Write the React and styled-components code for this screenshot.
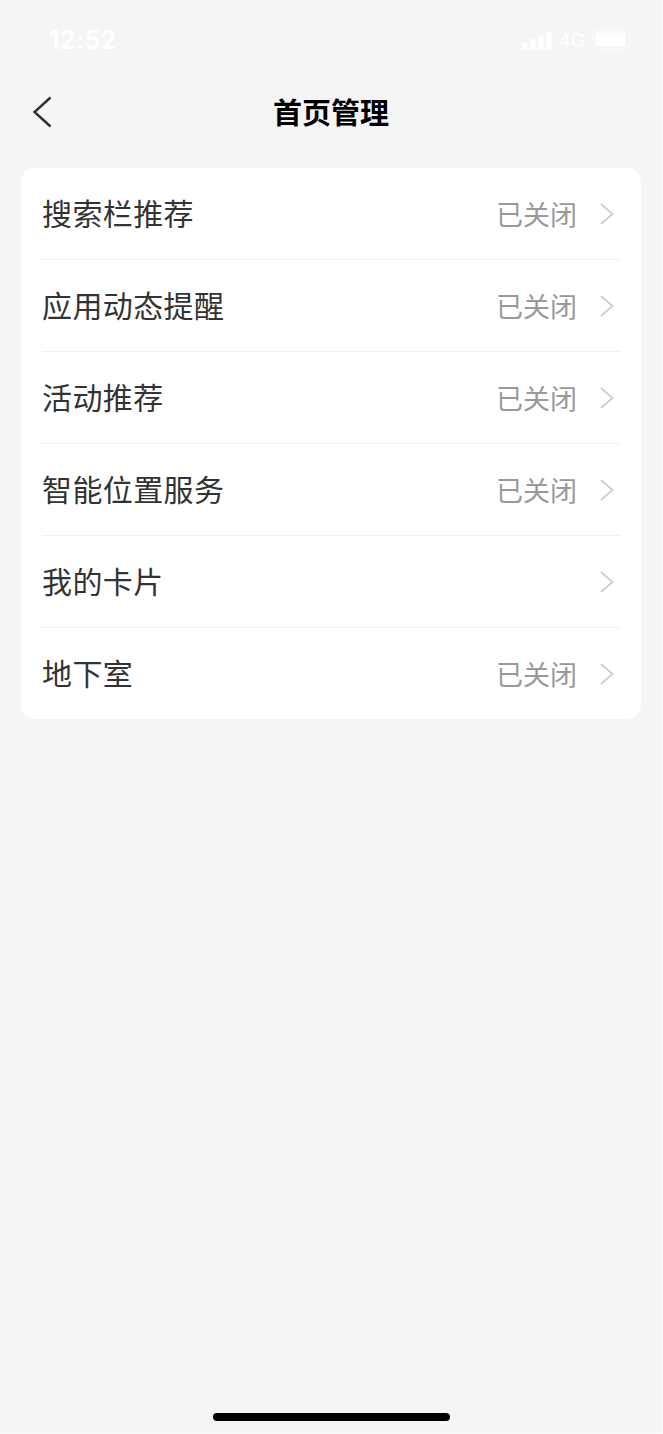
import React from 'react'
import styled, { createGlobalStyle } from 'styled-components'

const items = [
  { label: '搜索栏推荐', status: '已关闭' },
  { label: '应用动态提醒', status: '已关闭' },
  { label: '活动推荐', status: '已关闭' },
  { label: '智能位置服务', status: '已关闭' },
  { label: '我的卡片' },
  { label: '地下室', status: '已关闭' },
]

const App = () => {
  return (
    <>
      <GlobalStyle />
      <Screen>
        <StatusBar>
          <Time>12:52</Time>
          <StatusIcons>
            <svg width='30' height='19' viewBox='0 0 30 19' fill='#fff'>
              <rect x='0' y='11.5' width='5.6' height='7' rx='1.4' />
              <rect x='8' y='8' width='5.6' height='10.5' rx='1.4' />
              <rect x='16' y='4.5' width='5.6' height='14' rx='1.4' />
              <rect x='24' y='0.5' width='5.6' height='18' rx='1.4' />
            </svg>
            <Network>4G</Network>
            <svg width='43' height='22' viewBox='0 0 43 22' fill='none'>
              <rect x='1' y='1' width='36.5' height='19' rx='5.5' stroke='#f9f9f9' strokeWidth='1.8' />
              <rect x='3.5' y='3.5' width='30' height='14' rx='3.5' fill='#fff' />
              <path d='M39.5 7.5c3 1 3 5.500 0 6.500z' fill='#f9f9f9' />
            </svg>
          </StatusIcons>
        </StatusBar>
        <Header>
          <BackButton aria-label='返回'>
            <svg width='20' height='32' viewBox='0 0 20 32' fill='none'>
              <path d='M18.500 1.500L2.500 16L18.500 30.500' stroke='#303030' strokeWidth='2.4' />
            </svg>
          </BackButton>
          <Title>首页管理</Title>
        </Header>
        <Card>
          {items.map(({ label, status }) => (
            <Row key={label}>
              <Label>{label}</Label>
              {status && <Status>{status}</Status>}
              <svg width='14' height='22' viewBox='0 0 14 22' fill='none'>
                <path d='M1 1L12.500 11L1 21' stroke='#ccc' strokeWidth='1.7' />
              </svg>
            </Row>
          ))}
        </Card>
        <HomeIndicator />
      </Screen>
    </>
  )
}

const GlobalStyle = createGlobalStyle`
  * {
    box-sizing: border-box;
  }
  body {
    margin: 0;
    background: #f5f5f5;
    font-family: 'Noto Sans CJK SC', sans-serif;
  }
`

const Screen = styled.div`
  display: flex;
  flex-direction: column;
  height: 1434px;
  padding: 0 21px 12px 21px;
  border-right: 1px solid #fbfbfb;
  border-bottom: 1px solid #fbfbfb;
  background: #f5f5f5;
`

const StatusBar = styled.div`
  display: flex;
  align-items: center;
  justify-content: space-between;
  height: 80px;
  padding: 0 6px 0 28px;
  color: #fff;
  font-family: Inter, sans-serif;
`

const Time = styled.span`
  font-size: 25px;
  font-weight: 600;
  letter-spacing: 0.5px;
`

const StatusIcons = styled.div`
  display: flex;
  align-items: center;
  gap: 7px;
`

const Network = styled.span`
  font-size: 19px;
  font-weight: 400;
`

const Header = styled.header`
  display: grid;
  grid-template-columns: 60px 1fr 60px;
  align-items: center;
  height: 64px;
  margin-bottom: 24px;
`

const BackButton = styled.button`
  display: flex;
  border: none;
  background: none;
  padding: 0 0 0 11px;
`

const Title = styled.h1`
  margin: 0;
  padding-bottom: 2px;
  color: #000;
  font-size: 29px;
  font-weight: 700;
  line-height: 40px;
  text-align: center;
`

const Card = styled.main`
  height: 551px;
  padding: 0 21px;
  border-radius: 14px;
  background: #fff;
`

const Row = styled.div`
  display: flex;
  align-items: center;
  height: 92px;
  padding-right: 6px;
  border-bottom: 1px solid #f0f0f0;

  &:last-child {
    height: 91px;
    border-bottom: none;
  }
`

const Label = styled.span`
  flex: 1;
  padding-bottom: 4px;
  color: #333;
  font-size: 30px;
  line-height: 44px;
  letter-spacing: 0.4px;
`

const Status = styled.span`
  margin-right: 23px;
  color: #999;
  font-size: 27px;
  line-height: 40px;
`

const HomeIndicator = styled.div`
  width: 237px;
  height: 8px;
  margin: auto auto 0;
  border-radius: 4px;
  background: #000;
`

export default App
